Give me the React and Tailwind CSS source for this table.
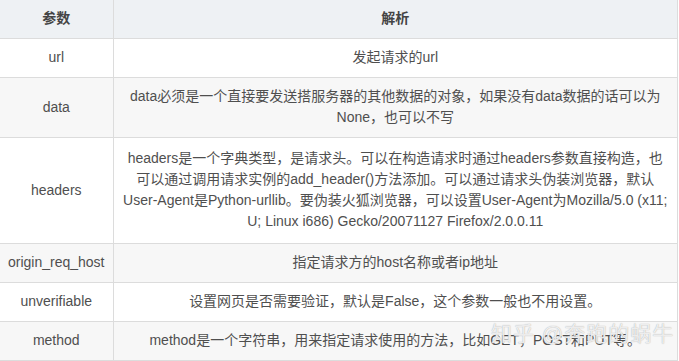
import React from 'react'

const rows = [
  { name: 'url', h: 'h-[39px]', bg: 'bg-white', lines: ['发起请求的url'] },
  {
    name: 'data',
    h: 'h-[60px]',
    bg: 'bg-[#f7f7f7]',
    lines: ['data必须是一个直接要发送搭服务器的其他数据的对象，如果没有data数据的话可以为', 'None，也可以不写'],
  },
  {
    name: 'headers',
    h: 'h-[106px]',
    bg: 'bg-white',
    lines: [
      'headers是一个字典类型，是请求头。可以在构造请求时通过headers参数直接构造，也',
      '可以通过调用请求实例的add_header()方法添加。可以通过请求头伪装浏览器，默认',
      'User-Agent是Python-urllib。要伪装火狐浏览器，可以设置User-Agent为Mozilla/5.0 (x11;',
      'U; Linux i686) Gecko/20071127 Firefox/2.0.0.11',
    ],
  },
  { name: 'origin_req_host', h: 'h-[39px]', bg: 'bg-[#f7f7f7]', lines: ['指定请求方的host名称或者ip地址'] },
  { name: 'unverifiable', h: 'h-[39px]', bg: 'bg-white', lines: ['设置网页是否需要验证，默认是False，这个参数一般也不用设置。'] },
  {
    name: 'method',
    h: 'h-[39px]',
    bg: 'bg-[#f7f7f7]',
    lines: ['method是一个字符串，用来指定请求使用的方法，比如GET，POST和PUT等。'],
  },
]

export default function App() {
  return (
    <div className="relative w-[679px] h-[361px] overflow-hidden bg-white font-['Liberation_Sans','Noto_Sans_CJK_SC',sans-serif] text-[14px] text-[#4f4f4f]">
      <table className="w-[678px] border-collapse table-fixed">
        <colgroup>
          <col className="w-[113px]" />
          <col />
        </colgroup>
        <thead>
          <tr className="h-[38px] bg-[#eef1f4]">
            <th className="border-r border-b border-[#dcdcdc] text-center font-bold text-[#444]">参数</th>
            <th className="border-r border-b border-[#dcdcdc] text-center font-bold text-[#444]">解析</th>
          </tr>
        </thead>
        <tbody>
          {rows.map((r) => (
            <tr key={r.name} className={`${r.h} ${r.bg}`}>
              <td className="border-r border-b border-[#dcdcdc] text-center leading-[21px]">{r.name}</td>
              <td className="border-r border-b border-[#dcdcdc] px-1 text-center leading-[21px]">
                {r.lines.map((l, i) => (
                  <div key={i} className="whitespace-nowrap">
                    {l}
                  </div>
                ))}
              </td>
            </tr>
          ))}
        </tbody>
      </table>

      {/* watermark */}
      <div className="absolute left-[491px] top-[318px] text-[21px] text-white/80 [text-shadow:0_0_1px_#9a9a9a] tracking-[1px]">
        知乎 @奔跑的蜗牛
      </div>
    </div>
  )
}
